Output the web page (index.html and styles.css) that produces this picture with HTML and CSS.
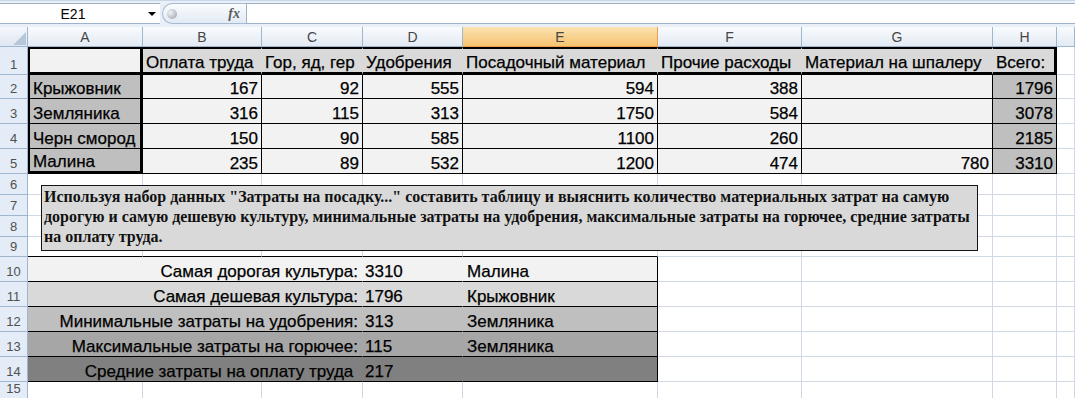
FILE: index.html
```html
<!DOCTYPE html>
<html lang="ru">
<head>
    <meta charset="UTF-8">
    <meta name="viewport" content="width=device-width, initial-scale=1.0">
    <title>Затраты на посадку</title>
    <link rel="stylesheet" href="styles.css">
</head>
<body>
<div class="app">

    <div class="fbar">
        <div class="namebox"><span class="ref">E21</span><span class="drop"></span></div>
        <div class="pill"><span class="ball"></span><span class="fx">fx</span></div>
        <div class="formula"></div>
    </div>

    <table class="sheet">
        <colgroup>
            <col class="w-rh"><col class="w-a"><col class="w-b"><col class="w-c"><col class="w-d">
            <col class="w-e"><col class="w-f"><col class="w-g"><col class="w-h"><col class="w-i">
        </colgroup>
        <tr class="hr">
            <th class="corner"><span class="tri"></span></th>
            <th class="ch">A</th><th class="ch">B</th><th class="ch">C</th><th class="ch">D</th>
            <th class="ch sel">E</th><th class="ch">F</th><th class="ch">G</th><th class="ch">H</th><th class="ch"></th>
        </tr>
        <tr class="r1">
            <th class="rh">1</th>
            <td class="d a a1"></td>
            <td class="d h1">Оплата труда</td>
            <td class="d h1">Гор, яд, гер</td>
            <td class="d h1">Удобрения</td>
            <td class="d h1">Посадочный материал</td>
            <td class="d h1">Прочие расходы</td>
            <td class="d h1">Материал на шпалеру</td>
            <td class="d h1 last">Всего:</td>
            <td></td>
        </tr>
        <tr class="r2">
            <th class="rh">2</th>
            <td class="d a">Крыжовник</td>
            <td class="d">167</td><td class="d">92</td><td class="d">555</td><td class="d">594</td>
            <td class="d">388</td><td class="d"></td><td class="d tot">1796</td><td></td>
        </tr>
        <tr class="r3">
            <th class="rh">3</th>
            <td class="d a">Земляника</td>
            <td class="d">316</td><td class="d">115</td><td class="d">313</td><td class="d">1750</td>
            <td class="d">584</td><td class="d"></td><td class="d tot">3078</td><td></td>
        </tr>
        <tr class="r3">
            <th class="rh">4</th>
            <td class="d a">Черн смород</td>
            <td class="d">150</td><td class="d">90</td><td class="d">585</td><td class="d">1100</td>
            <td class="d">260</td><td class="d"></td><td class="d tot">2185</td><td></td>
        </tr>
        <tr class="r3 r5">
            <th class="rh">5</th>
            <td class="d a">Малина</td>
            <td class="d">235</td><td class="d">89</td><td class="d">532</td><td class="d">1200</td>
            <td class="d">474</td><td class="d">780</td><td class="d tot">3310</td><td></td>
        </tr>
        <tr class="r6">
            <th class="rh">6</th>
            <td></td><td></td><td></td><td></td><td></td><td></td><td></td><td></td><td></td>
        </tr>
        <tr class="r6">
            <th class="rh">7</th>
            <td></td><td></td><td></td><td></td><td></td><td></td><td></td><td></td><td></td>
        </tr>
        <tr class="r6">
            <th class="rh">8</th>
            <td></td><td></td><td></td><td></td><td></td><td></td><td></td><td></td><td></td>
        </tr>
        <tr class="r9">
            <th class="rh">9</th>
            <td class="edge"></td><td class="edge"></td><td class="edge"></td><td class="edge"></td><td class="edge"></td>
            <td></td><td></td><td></td><td></td>
        </tr>
        <tr class="r10 s1">
            <th class="rh">10</th>
            <td colspan="3" class="lbl">Самая дорогая культура:</td>
            <td class="num">3310</td><td class="nm">Малина</td>
            <td></td><td></td><td></td><td></td>
        </tr>
        <tr class="r10 s2">
            <th class="rh">11</th>
            <td colspan="3" class="lbl">Самая дешевая культура:</td>
            <td class="num">1796</td><td class="nm">Крыжовник</td>
            <td></td><td></td><td></td><td></td>
        </tr>
        <tr class="r10 s3">
            <th class="rh">12</th>
            <td colspan="3" class="lbl">Минимальные затраты на удобрения:</td>
            <td class="num">313</td><td class="nm">Земляника</td>
            <td></td><td></td><td></td><td></td>
        </tr>
        <tr class="r10 s4">
            <th class="rh">13</th>
            <td colspan="3" class="lbl">Максимальные затраты на горючее:</td>
            <td class="num">115</td><td class="nm">Земляника</td>
            <td></td><td></td><td></td><td></td>
        </tr>
        <tr class="r10 s5">
            <th class="rh">14</th>
            <td colspan="3" class="lbl">Средние затраты на оплату труда&nbsp;</td>
            <td class="num">217</td><td class="nm"></td>
            <td></td><td></td><td></td><td></td>
        </tr>
        <tr class="r15">
            <th class="rh">15</th>
            <td></td><td></td><td></td><td></td><td></td><td></td><td></td><td></td><td></td>
        </tr>
    </table>

    <div class="note">
        <span class="ln">Используя набор данных "Затраты на посадку..." составить таблицу и выяснить количество материальных затрат на самую</span>
        <span class="ln">дорогую и самую дешевую культуру, минимальные затраты на удобрения, максимальные затраты на горючее, средние затраты</span>
        <span class="ln">на оплату труда.</span>
    </div>

</div>
</body>
</html>
```

FILE: styles.css
```css
body {
    margin: 0;
    background: rgb(255, 255, 255);
    font-family: "Liberation Sans", Arial, sans-serif;
    overflow: hidden;
}

.app {
    position: relative;
    width: 1075px;
    height: 398px;
    overflow: hidden;
}

/* formula bar */
.fbar {
    height: 27px;
    box-sizing: border-box;
    padding-top: 2px;
    background: rgb(232, 239, 247);
    border-top: 1px solid rgb(199, 214, 233);
    display: flex;
    align-items: flex-start;
}

.namebox {
    width: 160px;
    height: 21px;
    box-sizing: border-box;
    background: rgb(255, 255, 255);
    border-top: 1px solid rgb(157, 179, 204);
    border-bottom: 1px solid rgb(157, 179, 204);
    display: flex;
    align-items: center;
}

.ref {
    width: 146px;
    text-align: center;
    font-size: 14px;
    color: rgb(0, 0, 0);
}

.drop {
    width: 0;
    height: 0;
    margin-left: 2px;
    border-left: 4px solid transparent;
    border-right: 4px solid transparent;
    border-top: 4px solid rgb(0, 0, 0);
}

.pill {
    width: 84px;
    height: 21px;
    box-sizing: border-box;
    margin-left: 2px;
    border: 1px solid rgb(166, 185, 209);
    border-right: none;
    border-radius: 11px 0 0 11px;
    background: linear-gradient(rgb(250, 252, 254), rgb(226, 234, 244));
    display: flex;
    align-items: center;
    justify-content: space-between;
    padding: 0 6px 0 4px;
}

.ball {
    width: 10px;
    height: 10px;
    border-radius: 50%;
    background: radial-gradient(circle at 35% 35%, rgb(240, 242, 245), rgb(150, 158, 170));
}

.fx {
    font-family: "Liberation Serif", serif;
    font-style: italic;
    font-weight: bold;
    font-size: 14px;
    color: rgb(90, 90, 90);
}

.formula {
    flex: 1;
    height: 21px;
    box-sizing: border-box;
    background: rgb(255, 255, 255);
    border: 1px solid rgb(157, 179, 204);
    border-right: none;
}

/* grid */
.sheet {
    table-layout: fixed;
    width: 1075px;
    border-collapse: separate;
    border-spacing: 0;
}

.w-rh { width: 28px; }
.w-a { width: 115px; }
.w-b { width: 119px; }
.w-c { width: 101px; }
.w-d { width: 100px; }
.w-e { width: 195px; }
.w-f { width: 144px; }
.w-g { width: 191px; }
.w-h { width: 64px; }
.w-i { width: 18px; }

.hr { height: 20px; }
.r1 { height: 28px; }
.r2 { height: 24px; }
.r3 { height: 25px; }
.r6 { height: 21px; }
.r9 { height: 20px; }
.r10 { height: 25px; }
.r15 { height: 16px; }

td {
    padding: 0 3px;
    border-right: 1px solid rgb(208, 215, 229);
    border-bottom: 1px solid rgb(208, 215, 229);
    vertical-align: bottom;
    font-size: 17px;
    line-height: 18px;
    white-space: nowrap;
    overflow: hidden;
    color: rgb(0, 0, 0);
    -webkit-text-stroke: 0.25px rgb(0, 0, 0);
}

.corner {
    padding: 0 1px 1px 0;
    text-align: right;
    vertical-align: bottom;
    line-height: 0;
    background: linear-gradient(rgb(244, 247, 251), rgb(223, 231, 242));
    border-right: 1px solid rgb(158, 182, 206);
    border-bottom: 1px solid rgb(158, 182, 206);
}

.tri {
    display: inline-block;
    width: 0;
    height: 0;
    border-left: 13px solid transparent;
    border-bottom: 13px solid rgb(182, 199, 220);
}

.ch {
    padding: 0;
    font-weight: normal;
    font-size: 14px;
    color: rgb(70, 70, 70);
    background: linear-gradient(rgb(249, 251, 253), rgb(227, 234, 244));
    border-right: 1px solid rgb(158, 182, 206);
    border-bottom: 1px solid rgb(158, 182, 206);
}

.ch.sel {
    background: linear-gradient(rgb(252, 226, 178), rgb(246, 196, 112));
    border-right-color: rgb(238, 160, 78);
    border-bottom-color: rgb(238, 160, 78);
}

.rh {
    padding: 0 0 3px 0;
    vertical-align: bottom;
    font-weight: normal;
    font-size: 13px;
    line-height: 13px;
    color: rgb(80, 80, 80);
    background: rgb(228, 236, 247);
    border-right: 1px solid rgb(158, 182, 206);
    border-bottom: 1px solid rgb(158, 182, 206);
}

/* data table */
.d {
    background: rgb(242, 242, 242);
    text-align: right;
    border-right-color: rgb(0, 0, 0);
    border-bottom-color: rgb(0, 0, 0);
}

.r1 .d {
    border-top: 2px solid rgb(0, 0, 0);
    border-bottom: 3px solid rgb(0, 0, 0);
}

.h1 {
    background: rgb(217, 217, 217);
    text-align: left;
    border-right-color: transparent;
}

.h1.last {
    border-right: 3px solid rgb(0, 0, 0);
}

.a {
    background: rgb(191, 191, 191);
    text-align: left;
    border-left: 2px solid rgb(0, 0, 0);
    border-right: 3px solid rgb(0, 0, 0);
}

.a1 {
    background: rgb(242, 242, 242);
}

.r5 .a {
    border-bottom: 3px solid rgb(0, 0, 0);
}

.tot {
    background: rgb(191, 191, 191);
}

/* summary */
.edge {
    border-bottom-color: rgb(0, 0, 0);
}

.lbl, .num, .nm {
    border-bottom-color: rgb(0, 0, 0);
}

.lbl {
    text-align: right;
    padding-right: 4px;
    border-right-color: transparent;
}

.num {
    padding-left: 2px;
    border-right-color: transparent;
}

.nm {
    padding-left: 4px;
    border-right-color: rgb(0, 0, 0);
}

.s1 td.lbl, .s1 td.num, .s1 td.nm { background: rgb(242, 242, 242); }
.s2 td.lbl, .s2 td.num, .s2 td.nm { background: rgb(217, 217, 217); }
.s3 td.lbl, .s3 td.num, .s3 td.nm { background: rgb(191, 191, 191); }
.s4 td.lbl, .s4 td.num, .s4 td.nm { background: rgb(166, 166, 166); }
.s5 td.lbl, .s5 td.num, .s5 td.nm { background: rgb(128, 128, 128); }

/* text box lying over the grid */
.note {
    position: absolute;
    left: 41px;
    top: 185px;
    width: 937px;
    height: 66px;
    box-sizing: border-box;
    padding: 1px 0 0 2px;
    background: rgb(217, 217, 217);
    border: 1px solid rgb(20, 20, 20);
    font-family: "Liberation Serif", "Times New Roman", serif;
    font-weight: bold;
    font-size: 16px;
    line-height: 20px;
    color: rgb(17, 17, 17);
}

.ln {
    display: block;
    white-space: nowrap;
}
```
